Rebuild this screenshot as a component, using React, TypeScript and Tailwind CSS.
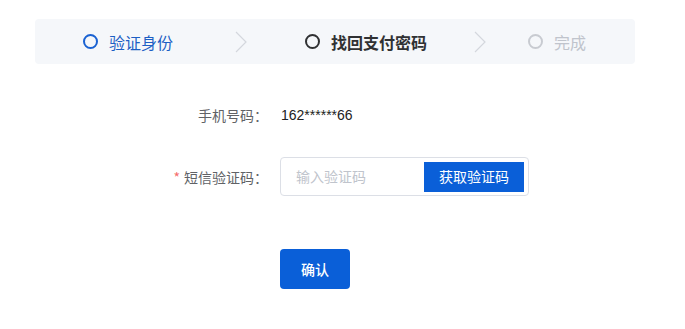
const font = { fontFamily: '"Noto Sans CJK SC", "Noto Sans", sans-serif' };

function Chevron() {
  return (
    <svg width="12" height="22" viewBox="0 0 12 22" fill="none" className="shrink-0">
      <path d="M1 1 L11 11 L1 21" stroke="#d4d7dd" strokeWidth="1.2" />
    </svg>
  );
}

function Step({ label, state }: { label: string; state: "done" | "active" | "todo" }) {
  const circle =
    state === "done" ? "border-[#1a62d2]" : state === "active" ? "border-[#303133]" : "border-[#c8cbd1]";
  const text =
    state === "done"
      ? "text-[#1d5fc4]"
      : state === "active"
        ? "text-[#303133] font-bold"
        : "text-[#c0c4cc]";
  return (
    <div className="flex shrink-0 items-center gap-[11px]">
      <span className={`h-[15px] w-[15px] rounded-full border-2 ${circle}`} />
      <span className={`text-[16px] leading-none ${text}`}>{label}</span>
    </div>
  );
}

export default function App() {
  return (
    <div className="h-[329px] w-[685px] overflow-hidden bg-white" style={font}>
      <div className="ml-[35px] mt-[19px] flex h-[45px] w-[600px] items-center rounded-[4px] bg-[#f5f7fa] pl-[48px]">
        <Step label="验证身份" state="done" />
        <div className="ml-[62px]">
          <Chevron />
        </div>
        <div className="ml-[58px]">
          <Step label="找回支付密码" state="active" />
        </div>
        <div className="ml-[47px]">
          <Chevron />
        </div>
        <div className="ml-[42px]">
          <Step label="完成" state="todo" />
        </div>
      </div>

      <div className="mt-[41px] flex items-center">
        <div className="w-[268px] text-right text-[14px] leading-[20px] text-[#606266]">手机号码：</div>
        <div
          className="ml-[13px] text-[14px] leading-[20px] text-[#222]"
          style={{ fontFamily: '"Liberation Sans", Arial, sans-serif' }}
        >
          162******66
        </div>
      </div>

      <div className="mt-[32px] flex items-center">
        <div className="w-[268px] text-right text-[14px] leading-[20px] text-[#606266]">
          <span className="mr-[4px] text-[#f56c6c]">*</span>短信验证码：
        </div>
        <div className="ml-[12px] flex h-[39px] w-[249px] items-center rounded-[4px] border border-[#dcdfe6] pl-[15px] pr-[4px]">
          <input
            placeholder="输入验证码"
            className="min-w-0 flex-1 bg-transparent text-[14px] text-[#333] outline-none placeholder:text-[#c0c4cc]"
          />
          <button className="h-[30px] w-[100px] shrink-0 bg-[#0a5fd8] text-[14px] text-white">获取验证码</button>
        </div>
      </div>

      <div className="mt-[53px] pl-[280px]">
        <button className="h-[40px] w-[70px] rounded-[4px] bg-[#0a5fd8] text-[14px] font-medium text-white">
          确认
        </button>
      </div>
    </div>
  );
}
